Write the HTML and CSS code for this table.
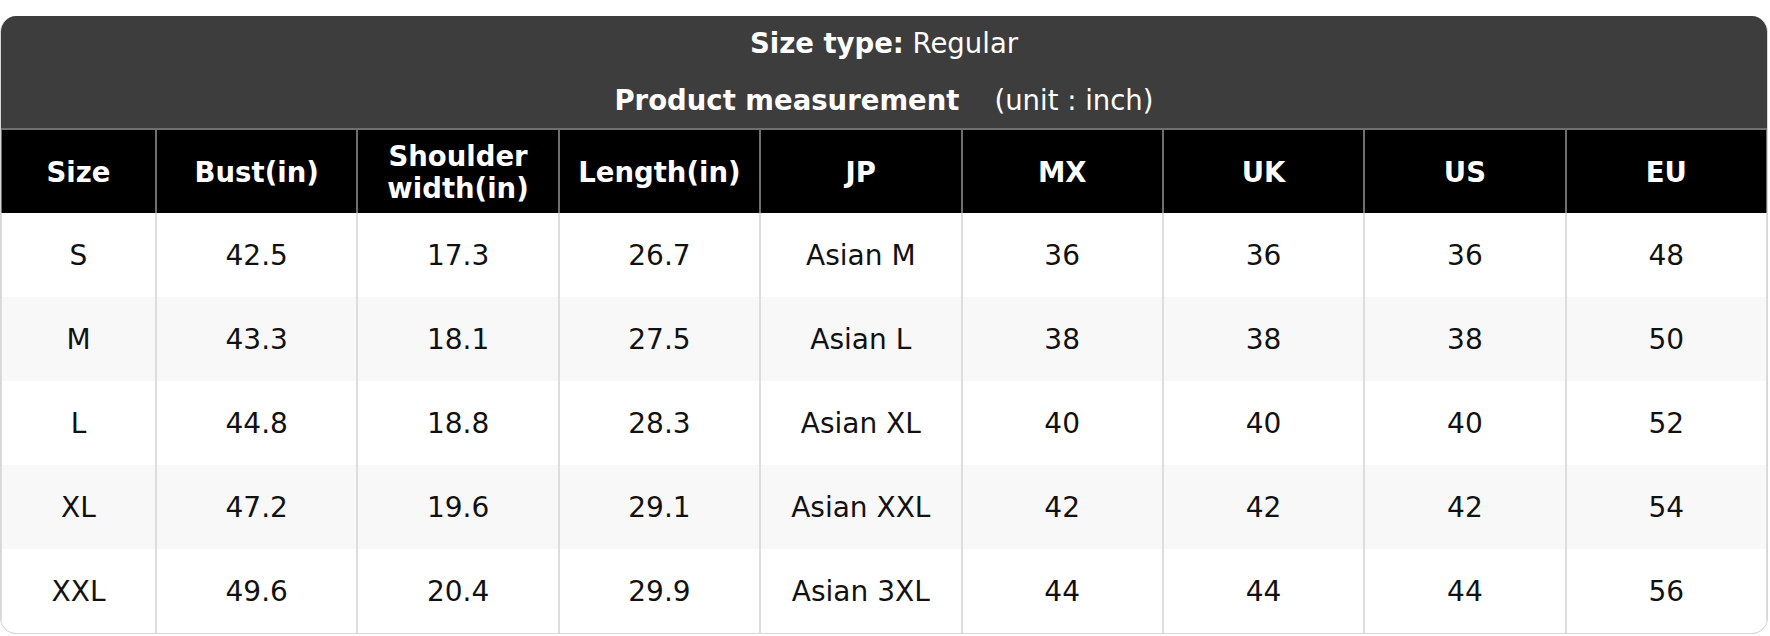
FILE: index.html
```html
<!DOCTYPE html>
<html>
<head>
<meta charset="utf-8">
<link rel="stylesheet" href="styles.css">
</head>
<body>
<div class="card">
  <div class="title">
    <div class="line"><b>Size type:</b> Regular</div>
    <div class="line"><b>Product measurement</b><span class="unit">(unit : inch)</span></div>
  </div>
  <table class="chart">
    <colgroup>
      <col class="c-size"><col><col><col><col><col><col><col><col>
    </colgroup>
    <thead>
      <tr><th>Size</th><th>Bust(in)</th><th>Shoulder width(in)</th><th>Length(in)</th><th>JP</th><th>MX</th><th>UK</th><th>US</th><th>EU</th></tr>
    </thead>
    <tbody>
      <tr><td>S</td><td>42.5</td><td>17.3</td><td>26.7</td><td>Asian M</td><td>36</td><td>36</td><td>36</td><td>48</td></tr>
      <tr><td>M</td><td>43.3</td><td>18.1</td><td>27.5</td><td>Asian L</td><td>38</td><td>38</td><td>38</td><td>50</td></tr>
      <tr><td>L</td><td>44.8</td><td>18.8</td><td>28.3</td><td>Asian XL</td><td>40</td><td>40</td><td>40</td><td>52</td></tr>
      <tr><td>XL</td><td>47.2</td><td>19.6</td><td>29.1</td><td>Asian XXL</td><td>42</td><td>42</td><td>42</td><td>54</td></tr>
      <tr><td>XXL</td><td>49.6</td><td>20.4</td><td>29.9</td><td>Asian 3XL</td><td>44</td><td>44</td><td>44</td><td>56</td></tr>
    </tbody>
  </table>
</div>
</body>
</html>
```

FILE: styles.css
```css
html, body {
  margin: 0;
  padding: 0;
  background: #ffffff;
}
body {
  font-family: "DejaVu Sans", Verdana, sans-serif;
  padding-top: 16px;
}
.card {
  width: 1768px;
  border: 1px solid #d6d6d6;
  border-top: none;
  border-radius: 16px;
  overflow: hidden;
  background: #ffffff;
  box-sizing: border-box;
  height: 618px;
}
.title {
  background: #3d3d3d;
  color: #ffffff;
  font-size: 27.5px;
  text-align: center;
  padding: 7px 0 8px;
  display: flex;
  flex-direction: column;
  gap: 17px;
}
.title .line {
  line-height: 40px;
  height: 40px;
}
.title b {
  font-weight: bold;
}
.title .unit {
  margin-left: 35px;
}
.chart {
  width: 1768px;
  margin-left: -1px;
  border-collapse: collapse;
  table-layout: fixed;
}
.chart .c-size {
  width: 155px;
}
.chart th {
  background: #000000;
  color: #ffffff;
  font-size: 27.5px;
  font-weight: bold;
  line-height: 32px;
  height: 84px;
  padding: 0 16px;
  border: 2px solid #6f6f6f;
  border-bottom: none;
  text-align: center;
  box-sizing: border-box;
}
.chart td {
  font-size: 28px;
  color: #111111;
  height: 84px;
  padding: 0;
  text-align: center;
  border-left: 2px solid #dddddd;
  border-right: 2px solid #dddddd;
  box-sizing: border-box;
}
.chart tbody tr:nth-child(even) td {
  background: #f8f8f8;
}
```
